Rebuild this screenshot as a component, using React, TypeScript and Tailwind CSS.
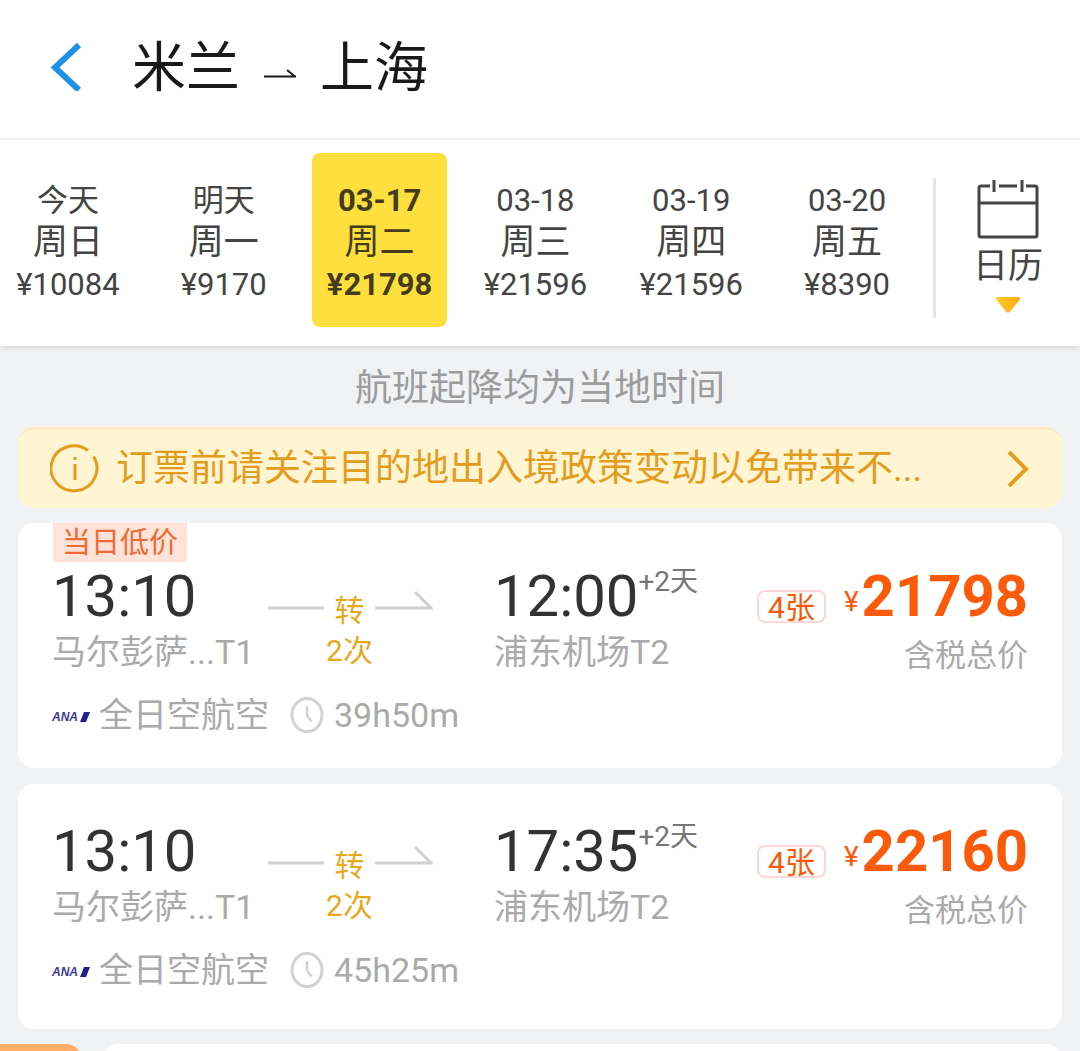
import React from 'react';

const days = [
  { date: '今天', week: '周日', price: '¥10084' },
  { date: '明天', week: '周一', price: '¥9170' },
  { date: '03-17', week: '周二', price: '¥21798', active: true },
  { date: '03-18', week: '周三', price: '¥21596' },
  { date: '03-19', week: '周四', price: '¥21596' },
  { date: '03-20', week: '周五', price: '¥8390' },
];

type Flight = {
  depart: string;
  from: string;
  arrive: string;
  to: string;
  price: string;
  duration: string;
  tag?: string;
};

const flights: Flight[] = [
  {
    depart: '13:10',
    from: '马尔彭萨...T1',
    arrive: '12:00',
    to: '浦东机场T2',
    price: '21798',
    duration: '39h50m',
    tag: '当日低价',
  },
  {
    depart: '13:10',
    from: '马尔彭萨...T1',
    arrive: '17:35',
    to: '浦东机场T2',
    price: '22160',
    duration: '45h25m',
  },
];

const AirlineLogo = () => (
  <span className="flex items-center w-[38px] h-3 mt-1 shrink-0 font-['Liberation_Sans',sans-serif]">
    <span className="w-[26px] text-[12px] leading-3 font-bold italic text-[#3a3a9c]">ANA</span>
    <svg className="w-3 h-[10px] shrink-0" viewBox="0 0 12 10" aria-hidden="true">
      <path d="M6 0H12L8 10H2Z" fill="#20208c" />
    </svg>
  </span>
);

const ClockIcon = () => (
  <svg className="w-9 h-9 shrink-0" viewBox="0 0 36 36" fill="none" stroke="#d2d2d2" strokeWidth="3">
    <ellipse cx="18" cy="18" rx="15" ry="16.500" />
    <path d="M18 9V18.500L22.500 24.500" strokeWidth="2.500" />
  </svg>
);

const Header = () => (
  <header className="flex items-center shrink-0 h-[140px] pl-[50px] pb-1 border-b-2 border-[#f4f4f4] bg-white">
    <button type="button" aria-label="返回" className="w-[34px] h-12">
      <svg className="w-[34px] h-12" viewBox="0 0 34 48" fill="none" stroke="#1e90e6" strokeWidth="6">
        <path d="M29 2L5 24.500L29 47" />
      </svg>
    </button>
    <h1 className="flex items-center ml-12 pt-1 text-[54px] leading-[72px] text-[#1a1a1a]">
      <span>米兰</span>
      <svg className="w-[34px] h-3 mx-[23px] mt-2" viewBox="0 0 34 12" aria-hidden="true">
        <path d="M1 9.500H33M24 3L32 9.500" stroke="#1a1a1a" strokeWidth="2" fill="none" />
      </svg>
      <span>上海</span>
    </h1>
  </header>
);

const DateStrip = () => (
  <nav className="relative z-10 flex shrink-0 h-[206px] bg-white shadow-[0_2px_6px_rgba(0,0,0,0.1)] text-[#444]">
    <div className="grid grid-cols-6 flex-1 -ml-2.5 pt-[13px]">
      {days.map((day) => (
        <button
          key={day.date}
          type="button"
          className={`flex flex-col items-center justify-center justify-self-center w-[135px] h-[174px] pt-1.5 rounded-lg ${
            day.active ? 'bg-[#ffdf3d] text-[#443c1c]' : ''
          }`}
        >
          <span className={`text-[31px] leading-[42px] ${day.active ? 'font-bold' : ''}`}>{day.date}</span>
          <span className="text-[35px] leading-[42px]">{day.week}</span>
          <span className={`text-[31px] leading-[42px] ${day.active ? 'font-bold' : ''}`}>{day.price}</span>
        </button>
      ))}
    </div>
    <div className="w-[3px] h-[140px] mt-[38px] ml-2 bg-[#e4e4e4]" />
    <button type="button" className="flex flex-col items-center w-36 pt-10">
      <svg className="w-[62px] h-[60px] shrink-0" viewBox="0 0 62 60" fill="none" stroke="#444" strokeWidth="3">
        <path d="M13 6H4Q2 6 2 8V55Q2 57 4 57H58Q60 57 60 55V8Q60 6 58 6H49M22 6H40M17 0V12M45 0V12M2 23H60" />
      </svg>
      <span className="text-[35px] leading-[54px]">日历</span>
      <svg className="w-[26px] h-4 mt-[3px] shrink-0" viewBox="0 0 26 16" aria-hidden="true">
        <defs>
          <linearGradient id="caret" x1="0" x2="1">
            <stop offset="0" stopColor="#ffcb2e" />
            <stop offset="1" stopColor="#ffa912" />
          </linearGradient>
        </defs>
        <path d="M2 0H24Q26 1 24.500 3L15 14.500Q13 16.500 11 14.500L1.500 3Q0 1 2 0Z" fill="url(#caret)" />
      </svg>
    </button>
  </nav>
);

const Notice = () => (
  <a
    href="#policy"
    className="flex items-center h-[81px] px-8 rounded-2xl border-t-3 border-[#faecc0] bg-[#fff5d3] text-[#e39c1c]"
  >
    <svg className="w-[50px] h-[50px] shrink-0" viewBox="0 0 50 50" fill="none" stroke="currentColor" strokeWidth="3">
      <path d="M38 6.500A23 22.500 0 1 0 43.500 12.500" />
      <path d="M25 20V36M25 13V16" />
    </svg>
    <span className="ml-4 text-[37px] leading-[54px] truncate">订票前请关注目的地出入境政策变动以免带来不...</span>
    <svg className="w-6 h-9 ml-auto shrink-0" viewBox="0 0 24 36" fill="none" stroke="currentColor" strokeWidth="4">
      <path d="M3 1L20 18L3 35" />
    </svg>
  </a>
);

const Stopover = () => (
  <div className="flex w-[242px] pl-4 pt-[29px]">
    <svg className="w-14 h-5" viewBox="0 0 56 20" fill="none">
      <path d="M0 17H56" stroke="#d0d0d0" strokeWidth="3" />
    </svg>
    <div className="flex flex-col items-center w-[51px] text-[30px] leading-10 text-[#e8a81c]">
      <span>转</span>
      <span>2次</span>
    </div>
    <svg className="w-[58px] h-5" viewBox="0 0 58 20" fill="none">
      <path d="M0 17H56L40 1" stroke="#d0d0d0" strokeWidth="3" />
    </svg>
  </div>
);

const FlightCard = ({ flight }: { flight: Flight }) => (
  <article className={`min-h-[245px] px-[34px] rounded-2xl bg-white ${flight.tag ? '' : 'pt-[33px]'}`}>
    {flight.tag && (
      <div className="w-fit h-[39px] ml-px px-[9px] rounded-b bg-[#ffe3d8] text-[29px] leading-10 text-[#ee6a32]">
        {flight.tag}
      </div>
    )}
    <div className="flex">
      <div className="w-[200px] whitespace-nowrap">
        <div className="text-[58px] leading-[68px] text-[#333]">{flight.depart}</div>
        <div className="text-[34px] leading-[44px] text-[#aaa]">{flight.from}</div>
      </div>
      <Stopover />
      <div className="whitespace-nowrap">
        <div className="flex text-[58px] leading-[68px] text-[#333]">
          {flight.arrive}
          <span className="text-[28px] leading-10 text-[#777]">+2天</span>
        </div>
        <div className="text-[34px] leading-[44px] text-[#aaa]">{flight.to}</div>
      </div>
      <div className="flex flex-col items-end ml-auto">
        <div className="flex items-start h-[68px] text-[#fa5a0a]">
          <span className="mt-7 mr-[18px] px-[9px] h-[33px] rounded-lg border-2 border-[#ffd5d5] text-[30px] leading-8">
            4张
          </span>
          <span className="mr-[3px] text-[28px] leading-[80px]">¥</span>
          <span className="text-[58px] leading-[68px] font-bold">{flight.price}</span>
        </div>
        <div className="text-[31px] leading-[52px] text-[#aaa]">含税总价</div>
      </div>
    </div>
    <div className="flex items-center h-11 mt-[11px] text-[34px] leading-[44px] text-[#aaa]">
      <AirlineLogo />
      <span className="ml-[9px]">全日空航空</span>
      <span className="flex items-center ml-5">
        <ClockIcon />
        <span className="ml-[9px]">{flight.duration}</span>
      </span>
    </div>
  </article>
);

const App = () => (
  <div className="flex flex-col h-screen overflow-hidden bg-[#f0f2f4] font-[Roboto,'Noto_Sans_CJK_SC',sans-serif]">
    <Header />
    <DateStrip />
    <main className="shrink-0 px-[18px]">
      <p className="h-[81px] text-center text-[37px] leading-[85px] text-[#9c9c9c]">航班起降均为当地时间</p>
      <Notice />
      <div className="flex flex-col gap-4 mt-[15px]">
        {flights.map((flight) => (
          <FlightCard key={flight.duration} flight={flight} />
        ))}
      </div>
    </main>
    {/* Bottom bar peeking in from below the list */}
    <footer className="flex items-start gap-5 mt-[15px] h-20 shrink-0">
      <div className="w-[82px] h-full rounded-tr-2xl bg-[#ffac69]" />
      <div className="flex-1 h-full mr-[18px] rounded-t-2xl bg-white" />
    </footer>
  </div>
);

export default App;
